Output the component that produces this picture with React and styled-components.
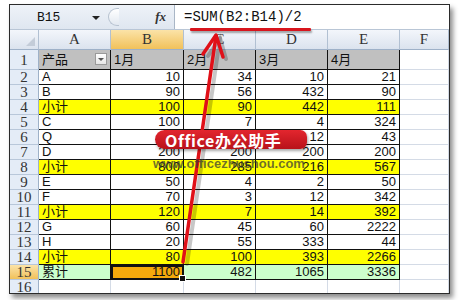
import React from "react";
import styled, { createGlobalStyle, css } from "styled-components";

const GlobalStyle = createGlobalStyle`
	html, body {
		margin: 0;
		padding: 0;
		background: #ffffff;
		overflow: hidden;
	}
`;

const CELL_FONT = `"Liberation Sans", "Noto Sans CJK SC", sans-serif`;
const HEAD_FONT = `"Liberation Serif", "DejaVu Serif", serif`;
const MONO_FONT = `"Liberation Mono", "DejaVu Sans Mono", monospace`;

const Page = styled.div`
	padding: 4px 0 0 9px;
	width: 461px;
	height: 300px;
	box-sizing: border-box;
`;

const Window = styled.div`
	position: relative;
	width: 441px;
	height: 290px;
	box-sizing: border-box;
	border: 1px solid #2b2b2b;
	box-shadow: 3px 4px 5px rgba(0, 0, 0, 0.45);
	overflow: hidden;
	background: #ffffff;
	display: flex;
	flex-direction: column;
`;

const FormulaBar = styled.div`
	height: 25px;
	flex: none;
	display: flex;
	align-items: stretch;
	background: linear-gradient(#eef2f8, #dfe6f0);
	border-bottom: 1px solid #b9c6d6;
	box-sizing: border-box;
`;

const NameBox = styled.div`
	width: 90px;
	display: flex;
	align-items: center;
	padding-left: 27px;
	box-sizing: border-box;
	font-family: ${MONO_FONT};
	font-size: 13px;
	color: #111;
	position: relative;
`;

const DropTri = styled.span`
	position: absolute;
	right: 0;
	top: 11px;
	border-left: 4px solid transparent;
	border-right: 4px solid transparent;
	border-top: 4px solid #222;
`;

const Splitter = styled.div`
	width: 10px;
	margin: 3px 0 3px 8px;
	border: 1px solid #b7c2d0;
	border-right: none;
	border-radius: 10px 0 0 10px;
	background: linear-gradient(#ffffff, #e2e8f0);
`;

const FxLabel = styled.div`
	width: 55px;
	display: flex;
	align-items: center;
	justify-content: flex-end;
	padding-right: 8px;
	box-sizing: border-box;
	font-family: ${HEAD_FONT};
	font-style: italic;
	font-weight: bold;
	font-size: 13px;
	color: #333;
`;

const FormulaInput = styled.div`
	flex: 1;
	background: #ffffff;
	border-left: 1px solid #a9b6c6;
	display: flex;
	align-items: center;
	padding-left: 9px;
	font-family: ${MONO_FONT};
	font-size: 14px;
	color: #111;
`;

const Sheet = styled.div`
	display: grid;
	grid-template-columns: 29px 72px 73px 72px 72px 72px 1fr;
	grid-template-rows: 20px 20px repeat(15, 15px);
	flex: none;
`;

const headBg = css`
	background: ${(p) =>
		p.$active
			? "linear-gradient(#fbe3a8, #f1c15a)"
			: "linear-gradient(#f3f6fb, #dbe3ee)"};
`;

const ColHead = styled.div`
	${headBg};
	border-right: 1px solid #b1c0d2;
	border-bottom: 1px solid #9eb1c8;
	box-sizing: border-box;
	display: flex;
	align-items: center;
	justify-content: center;
	font-family: ${HEAD_FONT};
	font-size: 15px;
	color: #333;
	position: relative;
`;

const CornerTri = styled.span`
	position: absolute;
	right: 3px;
	bottom: 3px;
	border-left: 9px solid transparent;
	border-bottom: 9px solid #c3ccd8;
`;

const RowHead = styled.div`
	background: ${(p) =>
		p.$active ? "linear-gradient(#fbe3a8, #f1c15a)" : "#e4ecf7"};
	border-right: 1px solid #9eb1c8;
	border-bottom: 1px solid #b8c7da;
	box-sizing: border-box;
	display: flex;
	align-items: center;
	justify-content: center;
	font-family: ${HEAD_FONT};
	font-size: 15px;
	line-height: 14px;
	color: #333;
`;

const Cell = styled.div`
	position: relative;
	background: ${(p) => p.$bg || "#ffffff"};
	border-right: 1px solid ${(p) => (p.$dark ? "#111" : "#d4dbe6")};
	border-bottom: 1px solid ${(p) => (p.$dark ? "#111" : "#d4dbe6")};
	box-sizing: border-box;
	display: flex;
	align-items: center;
	justify-content: ${(p) => (p.$num ? "flex-end" : "flex-start")};
	padding: 0 3px;
	font-family: ${CELL_FONT};
	font-size: 13px;
	line-height: 14px;
	color: #111;
	white-space: nowrap;
	${(p) =>
		p.$selected &&
		css`
			outline: 2px solid #111;
			outline-offset: -2px;
			z-index: 1;
		`}
`;

const FilterBtn = styled.span`
	position: absolute;
	right: 3px;
	top: 3px;
	width: 12px;
	height: 12px;
	background: linear-gradient(#ffffff, #e6e6e6);
	border: 1px solid #9a9a9a;
	box-sizing: border-box;
	&::after {
		content: "";
		position: absolute;
		left: 2px;
		top: 4px;
		border-left: 3px solid transparent;
		border-right: 3px solid transparent;
		border-top: 3px solid #555;
	}
`;

const FillHandle = styled.span`
	position: absolute;
	right: -3px;
	bottom: -3px;
	width: 5px;
	height: 5px;
	background: #111;
	border: 1px solid #fff;
	z-index: 2;
`;

const Underline = styled.div`
	position: absolute;
	left: 180px;
	top: 23px;
	width: 121px;
	height: 3px;
	background: #d8151d;
	box-shadow: 1px 2px 2px rgba(0, 0, 0, 0.35);
	border-radius: 1px;
`;

const Badge = styled.div`
	position: absolute;
	left: 145px;
	top: 125px;
	width: 152px;
	height: 19px;
	border-radius: 10px 7px 7px 10px;
	background: linear-gradient(#e3262e, #b8121a);
	box-shadow: 1px 2px 3px rgba(0, 0, 0, 0.35);
	display: flex;
	align-items: center;
	padding-left: 10px;
	box-sizing: border-box;
	font-family: "Noto Sans CJK SC", "Noto Sans", sans-serif;
	font-weight: 700;
	font-size: 16px;
	letter-spacing: 0.6px;
	color: #ffffff;
	z-index: 4;
`;

const Watermark = styled.div`
	position: absolute;
	left: 143px;
	top: 151px;
	font-family: "Liberation Sans", sans-serif;
	font-weight: 700;
	font-size: 13px;
	color: rgba(55, 55, 55, 0.72);
	z-index: 4;
	white-space: nowrap;
`;

const ArrowLayer = styled.svg`
	position: absolute;
	left: 0;
	top: 0;
	width: 439px;
	height: 288px;
	pointer-events: none;
	z-index: 3;
`;

const rows = [
	{ n: 1, kind: "head", cells: ["产品", "1月", "2月", "3月", "4月"] },
	{ n: 2, cells: ["A", 10, 34, 10, 21] },
	{ n: 3, cells: ["B", 90, 56, 432, 90] },
	{ n: 4, kind: "sub", cells: ["小计", 100, 90, 442, 111] },
	{ n: 5, cells: ["C", 100, 7, 4, 324] },
	{ n: 6, cells: ["Q", 500, 78, 12, 43] },
	{ n: 7, cells: ["D", 200, 200, 200, 200] },
	{ n: 8, kind: "sub", cells: ["小计", 800, 285, 216, 567] },
	{ n: 9, cells: ["E", 50, 4, 2, 50] },
	{ n: 10, cells: ["F", 70, 3, 12, 342] },
	{ n: 11, kind: "sub", cells: ["小计", 120, 7, 14, 392] },
	{ n: 12, cells: ["G", 60, 45, 60, 2222] },
	{ n: 13, cells: ["H", 20, 55, 333, 44] },
	{ n: 14, kind: "sub", cells: ["小计", 80, 100, 393, 2266] },
	{ n: 15, kind: "total", cells: ["累计", 1100, 482, 1065, 3336] },
	{ n: 16, kind: "empty", cells: ["", "", "", "", ""] },
];

const rowBg = {
	head: "#c0c0c0",
	sub: "#ffff00",
	total: "#ccffcc",
};

const App = () => {
	return (
		<>
			<GlobalStyle />
			<Page>
				<Window>
					<FormulaBar>
						<NameBox>
							B15
							<DropTri />
						</NameBox>
						<Splitter />
						<FxLabel>fx</FxLabel>
						<FormulaInput>=SUM(B2:B14)/2</FormulaInput>
					</FormulaBar>
					<Sheet>
						<ColHead>
							<CornerTri />
						</ColHead>
						{["A", "B", "C", "D", "E", "F"].map((c) => (
							<ColHead key={c} $active={c === "B"}>
								{c}
							</ColHead>
						))}
						{rows.map((r) => {
							const dark = r.kind !== "empty";
							return (
								<React.Fragment key={r.n}>
									<RowHead $active={r.n === 15}>{r.n}</RowHead>
									{r.cells.map((v, i) => {
										const selected = r.n === 15 && i === 1;
										return (
											<Cell
												key={i}
												$dark={dark}
												$num={r.kind !== "head" && i > 0}
												$bg={selected ? "#f5a90c" : rowBg[r.kind]}
												$selected={selected}
											>
												{v}
												{r.kind === "head" && i === 0 && <FilterBtn />}
												{selected && <FillHandle />}
											</Cell>
										);
									})}
									<Cell />
								</React.Fragment>
							);
						})}
					</Sheet>
					<Underline />
					<ArrowLayer viewBox="0 0 439 288">
						<g stroke="rgba(0,0,0,0.22)" strokeWidth="4" fill="none" strokeLinecap="round">
							<line x1="177" y1="259" x2="210" y2="33" />
							<polyline points="198,51 210,33 216,54" />
						</g>
						<g stroke="#e01018" strokeWidth="3.5" fill="none" strokeLinecap="round" strokeLinejoin="round">
							<line x1="173" y1="257" x2="206" y2="31" />
							<polyline points="193,49 206,30 213,52" />
						</g>
					</ArrowLayer>
					<Badge>Office办公助手</Badge>
					<Watermark>www.officezhushou.com</Watermark>
				</Window>
			</Page>
		</>
	);
};

export default App;
